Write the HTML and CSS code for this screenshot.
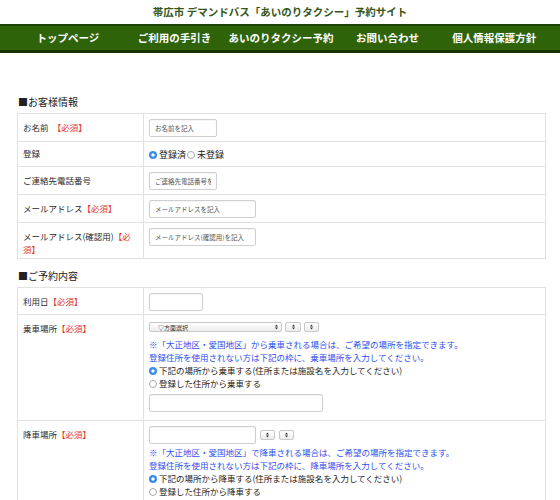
FILE: index.html
```html
<!DOCTYPE html>
<html lang="ja">
<head>
  <meta charset="UTF-8">
  <title>帯広市 デマンドバス「あいのりタクシー」予約サイト</title>
  <link rel="stylesheet" href="styles.css">
</head>
<body>
  <div class="site-title">帯広市 デマンドバス「あいのりタクシー」予約サイト</div>
  <div class="gnav">
    <ul>
      <li>トップページ</li>
      <li>ご利用の手引き</li>
      <li>あいのりタクシー予約</li>
      <li>お問い合わせ</li>
      <li>個人情報保護方針</li>
    </ul>
  </div>

  <div class="main">
    <h2 class="sec-title">■お客様情報</h2>
    <table class="form-table">
      <tr class="r-name">
        <th>お名前　<span class="req">【必須】</span></th>
        <td><input type="text" class="w67" placeholder="お名前を記入"></td>
      </tr>
      <tr class="r-reg">
        <th>登録</th>
        <td class="radios">
          <label><input type="radio" name="reg" checked>登録済</label><label><input type="radio" name="reg">未登録</label>
        </td>
      </tr>
      <tr class="r-tel">
        <th>ご連絡先電話番号</th>
        <td><input type="text" class="w67" placeholder="ご連絡先電話番号を記入"></td>
      </tr>
      <tr class="r-mail">
        <th>メールアドレス<span class="req">【必須】</span></th>
        <td><input type="text" class="w107" placeholder="メールアドレスを記入"></td>
      </tr>
      <tr class="r-mail2">
        <th>メールアドレス(確認用)<span class="req">【必須】</span></th>
        <td><input type="text" class="w107" placeholder="メールアドレス(確認用)を記入"></td>
      </tr>
    </table>

    <h2 class="sec-title sec2">■ご予約内容</h2>
    <table class="form-table">
      <tr class="r-date">
        <th>利用日<span class="req">【必須】</span></th>
        <td><input type="text" class="w53"></td>
      </tr>
      <tr>
        <th>乗車場所<span class="req">【必須】</span></th>
        <td class="place ride">
          <div class="sel-row">
            <span class="sel w133"><select><option>▽方面選択</option></select><svg viewBox="0 0 4 8"><path d="M0 3.2L2 .8 4 3.2zM0 4.8L2 7.2 4 4.8z"/></svg></span>
            <span class="sel w16"><select><option></option></select><svg viewBox="0 0 4 8"><path d="M0 3.2L2 .8 4 3.2zM0 4.8L2 7.2 4 4.8z"/></svg></span>
            <span class="sel w15"><select><option></option></select><svg viewBox="0 0 4 8"><path d="M0 3.2L2 .8 4 3.2zM0 4.8L2 7.2 4 4.8z"/></svg></span>
          </div>
          <p class="note">※「大正地区・愛国地区」から乗車される場合は、ご希望の場所を指定できます。<br>登録住所を使用されない方は下記の枠に、乗車場所を入力してください。</p>
          <label class="opt"><input type="radio" name="ride" checked>下記の場所から乗車する(住所または施設名を入力してください)</label>
          <label class="opt"><input type="radio" name="ride">登録した住所から乗車する</label>
          <input type="text" class="w173 addr">
        </td>
      </tr>
      <tr>
        <th>降車場所<span class="req">【必須】</span></th>
        <td class="place drop">
          <div class="sel-row">
            <input type="text" class="w107">
            <span class="sel w15"><select><option></option></select><svg viewBox="0 0 4 8"><path d="M0 3.2L2 .8 4 3.2zM0 4.8L2 7.2 4 4.8z"/></svg></span>
            <span class="sel w15"><select><option></option></select><svg viewBox="0 0 4 8"><path d="M0 3.2L2 .8 4 3.2zM0 4.8L2 7.2 4 4.8z"/></svg></span>
          </div>
          <p class="note">※「大正地区・愛国地区」で降車される場合は、ご希望の場所を指定できます。<br>登録住所を使用されない方は下記の枠に、降車場所を入力してください。</p>
          <label class="opt"><input type="radio" name="drop" checked>下記の場所から降車する(住所または施設名を入力してください)</label>
          <label class="opt"><input type="radio" name="drop">登録した住所から降車する</label>
          <input type="text" class="w173 addr">
        </td>
      </tr>
    </table>
  </div>
</body>
</html>
```

FILE: styles.css
```css
body {
  margin: 0;
  font-family: "Noto Sans CJK JP", "Noto Sans", sans-serif;
  color: #333;
  background: #fff;
}
.site-title {
  text-align: center;
  font-size: 10.5px;
  font-weight: bold;
  color: #34561a;
  height: 24px;
  line-height: 24px;
}
.gnav {
  background: #2e6309;
  border-top: 2px solid #1d4204;
  border-bottom: 3px solid #163303;
  height: 24px;
}
.gnav ul {
  list-style: none;
  margin: 0 auto;
  padding: 0 0 0 2px;
  width: 533px;
  display: flex;
}
.gnav li {
  flex: 1;
  text-align: center;
  color: #fff;
  font-weight: bold;
  font-size: 10.5px;
  line-height: 24px;
  white-space: nowrap;
}
.main {
  width: 529px;
  margin: 0 0 0 17px;
  padding-top: 42px;
}
.sec-title {
  margin: 0 0 4px 1px;
  font-size: 10px;
  font-weight: normal;
  color: #222;
  line-height: 14px;
}
.sec2 {
  margin-top: 10px;
}
.form-table {
  width: 100%;
  border-collapse: collapse;
  font-size: 8.5px;
  color: #2a2a2a;
}
.form-table th,
.form-table td {
  border: 1px solid #e2e2e2;
  vertical-align: top;
  text-align: left;
}
.form-table th {
  width: 116px;
  font-weight: normal;
  padding: 7px 4px 0 5px;
  line-height: 13px;
}
.form-table td {
  padding: 5px 5px 0 5px;
  line-height: 13px;
}
.req {
  color: #e8352a;
}
.r-name td, .r-tel td, .r-mail td { height: 22px; }
.r-date td { height: 21px; }
.r-mail2 td { height: 30px; }
.r-reg td { height: 18px; padding-top: 6px; }
.r-reg th { padding-top: 5px; }
input[type="text"] {
  box-sizing: border-box;
  height: 18px;
  border: 1px solid #cfcfcf;
  border-radius: 2px;
  box-shadow: inset 0 1px 1px rgba(0,0,0,0.04);
  padding: 0 5px;
  font-size: 6.5px;
  font-family: inherit;
  display: block;
  margin: 0;
}
input::placeholder {
  color: #555;
}
.w53 { width: 54px; }
.w67 { width: 68px; }
.w107 { width: 107px; }
.w173 { width: 174px; }
input[type="radio"] {
  appearance: none;
  -webkit-appearance: none;
  width: 8px;
  height: 8px;
  border-radius: 50%;
  border: 1px solid #aaa;
  background: #fff;
  margin: 0 2px 0 0;
  vertical-align: -1px;
  box-sizing: border-box;
}
input[type="radio"]:checked {
  border: none;
  background: radial-gradient(circle, #fff 0 1.4px, #3b8ded 1.8px);
}
.radios {
  font-size: 9px;
  color: #222;
}
.radios label + label {
  margin-left: 1px;
}
.form-table td.place {
  padding-bottom: 8px;
}
.form-table td.ride {
  padding-top: 7px;
}
.sel-row {
  display: flex;
  align-items: center;
  gap: 3px;
}
.drop .sel-row {
  gap: 4px;
}
.sel {
  position: relative;
  display: inline-block;
  height: 10px;
}
.sel select {
  appearance: none;
  -webkit-appearance: none;
  box-sizing: border-box;
  width: 100%;
  height: 10px;
  border: 1px solid #c8c8c8;
  border-radius: 2px;
  background: linear-gradient(#fff, #ececec);
  font-size: 6px;
  font-family: inherit;
  padding: 0 0 0 8px;
  color: #333;
  display: block;
}
.sel svg {
  position: absolute;
  right: 4px;
  top: 2px;
  width: 3px;
  height: 6px;
  fill: #333;
}
.w133 { width: 133px; }
.w16 { width: 16px; }
.w15 { width: 15px; }
.sel.w16 svg, .sel.w15 svg { right: 6px; }
.note {
  margin: 6px 0 0;
  color: #2d4ff0;
  line-height: 13px;
}
.drop .note {
  margin-top: 2px;
}
.opt {
  display: block;
  line-height: 13px;
  color: #222;
}
.addr {
  margin: 4px 0 0 0 !important;
}
```
